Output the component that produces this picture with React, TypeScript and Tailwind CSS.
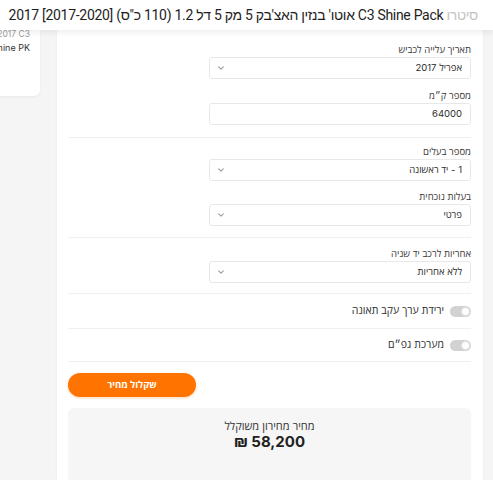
import React from "react";

const Chevron = () => (
  <svg width="8" height="8" viewBox="0 0 10 10" fill="none" stroke="#9a9a9a" strokeWidth="1.3" strokeLinecap="round" strokeLinejoin="round">
    <path d="M2 3.5 L5 6.5 L8 3.5" />
  </svg>
);

function Field({ label, value, select = true }: { label: string; value: string; select?: boolean }) {
  return (
    <div className="flex flex-col items-start">
      <div className="text-[9.5px] leading-[12px] text-[#3a3a3a] mb-[1px]">{label}</div>
      <div className="w-[262px] h-[22px] border border-[#e8e8e8] rounded-[3px] bg-white flex items-center justify-between pr-[8px] pl-[7px]">
        <span className="text-[9.5px] text-[#2b2b2b]">{value}</span>
        {select ? <Chevron /> : <span />}
      </div>
    </div>
  );
}

function Toggle({ label }: { label: string }) {
  return (
    <div className="flex items-center gap-[6px]">
      <div className="w-[21px] h-[11px] rounded-full bg-[#d2d2d2] flex items-center justify-start pr-[1px]">
        <div className="w-[9px] h-[9px] rounded-full bg-white border border-[#e2e2e2]" />
      </div>
      <span className="text-[10.5px] text-[#2e2e2e]">{label}</span>
    </div>
  );
}

export default function App() {
  return (
    <div
      className="w-[493px] h-[480px] overflow-hidden bg-[#f5f5f5] flex flex-col"
      style={{ fontFamily: 'Inter, "Open Sans", "Liberation Sans", sans-serif' }}
    >
      <div
        dir="rtl"
        className="h-[30px] shrink-0 bg-white shadow-[0_2px_6px_rgba(0,0,0,0.08)] relative z-10 flex items-center pr-[15px] whitespace-nowrap overflow-hidden text-[14px] tracking-[-0.3px] text-[#1e1e1e]"
        style={{ fontFamily: 'Roboto, "Liberation Sans", sans-serif' }}
      >
        <span className="text-[#c4c4c4]">סיטרו</span>
        <span>&nbsp;C3 Shine Pack אוטו' בנזין האצ'בק 5 מק 5 דל 1.2 (110 כ"ס) [2017-2020] 2017</span>
      </div>
      <div className="flex flex-1 min-h-0">
        <div className="w-[40px] shrink-0 h-[66px] bg-white rounded-br-[6px] overflow-hidden shadow-[0_1px_3px_rgba(0,0,0,0.05)]">
          <div className="flex flex-col items-end pr-[10px] whitespace-nowrap -mt-[2px]">
            <div className="text-[8.5px] leading-[13px] text-[#9a9a9a]">2017 C3</div>
            <div className="text-[9px] leading-[13px] text-[#333]">Shine PK</div>
          </div>
        </div>
        <div
          dir="rtl"
          className="ml-[17px] w-[426px] bg-white shadow-[0_1px_3px_rgba(0,0,0,0.05)] px-[12px] pl-[11px] pt-[14px]"
        >
          <div className="flex flex-col gap-[11px] pb-[12px] border-b border-[#f0f0f0]">
            <Field label="תאריך עלייה לכביש" value="אפריל 2017" />
            <Field label="מספר ק״מ" value="64000" select={false} />
          </div>
          <div className="flex flex-col gap-[10px] pt-[8px] pb-[11px] border-b border-[#f0f0f0]">
            <Field label="מספר בעלים" value="1 - יד ראשונה" />
            <Field label="בעלות נוכחית" value="פרטי" />
          </div>
          <div className="flex flex-col pt-[10px] pb-[10px] border-b border-[#f0f0f0]">
            <Field label="אחריות לרכב יד שניה" value="ללא אחריות" />
          </div>
          <div className="h-[35px] flex items-center border-b border-[#f0f0f0]">
            <Toggle label="ירידת ערך עקב תאונה" />
          </div>
          <div className="h-[33px] flex items-center border-b border-[#f0f0f0]">
            <Toggle label="מערכת גפ״ם" />
          </div>
          <div className="flex justify-end pt-[11px]">
            <button className="w-[128px] h-[24px] rounded-full bg-[#ff7300] text-white text-[9.5px] font-bold shadow-[0_1px_3px_rgba(255,115,0,0.3)]">
              שקלול מחיר
            </button>
          </div>
          <div className="mt-[11px] bg-[#f6f6f6] rounded-[6px] h-[90px] flex flex-col items-center pt-[11px]">
            <div className="text-[11px] leading-[14px] text-[#333]">מחיר מחירון משוקלל</div>
            <div className="text-[15px] leading-[18px] font-bold text-[#222]">58,200 ₪</div>
          </div>
        </div>
      </div>
    </div>
  );
}
